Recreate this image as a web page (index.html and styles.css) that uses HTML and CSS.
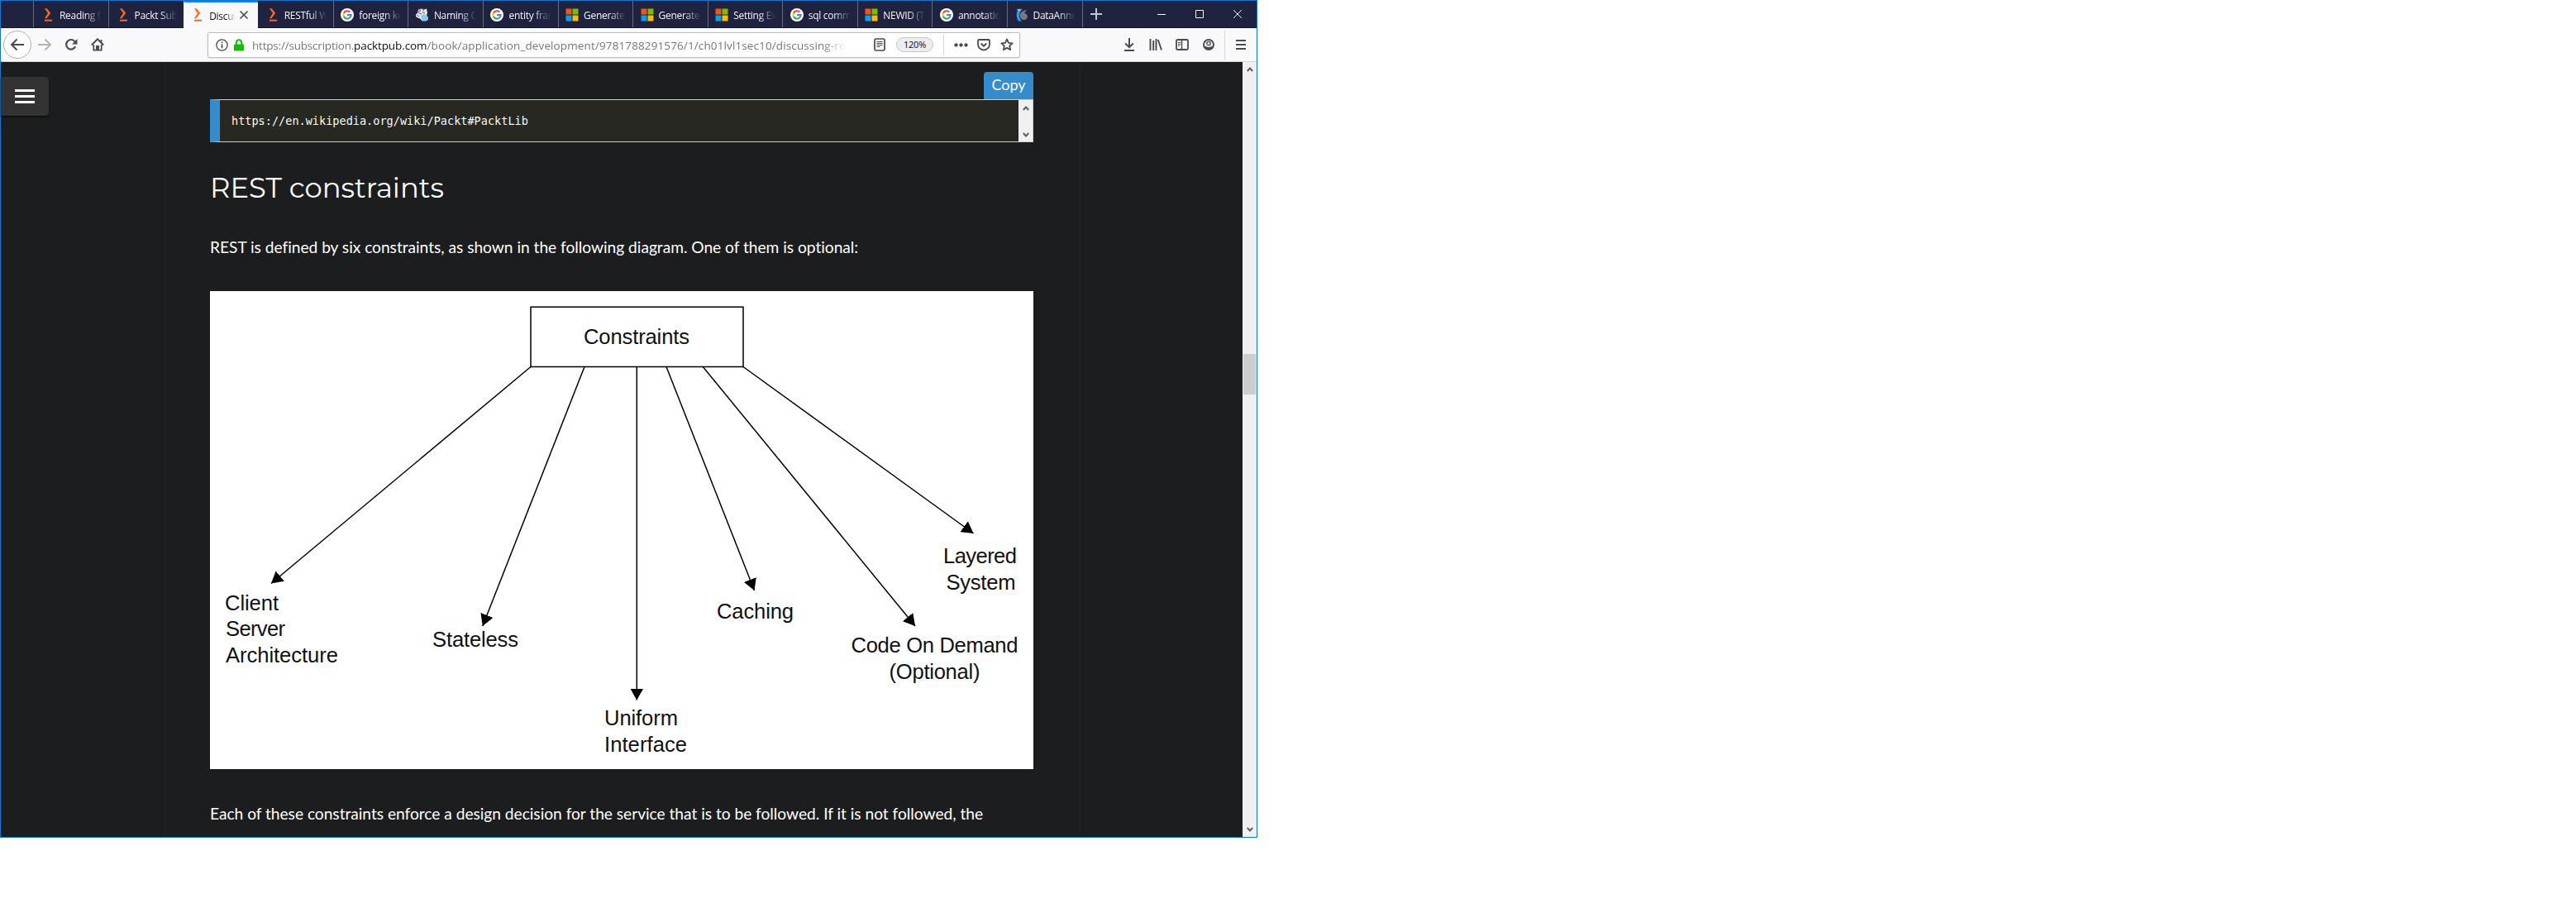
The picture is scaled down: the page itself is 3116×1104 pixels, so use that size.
FILE: index.html
```html
<!DOCTYPE html>
<html lang="en">
<head>
<meta charset="utf-8">
<title>Discussing RESTful</title>
<link rel="stylesheet" href="styles.css">
</head>
<body>
<svg class="defs" width="0" height="0">
  <symbol id="packt" viewBox="0 0 16 16"><path d="M4 0.3h2.600l4.600 5.500-4.800 6.400-2.400-.2 4-6z" fill="#f36b22"/><path d="M4 13.700h9v2H4z" fill="#f36b22"/></symbol>
  <symbol id="google" viewBox="0 0 16 16"><circle cx="8" cy="8" r="8" fill="#fff"/><g fill="none" stroke-width="2.100"><path d="M11.400 4.600A4.600 4.600 0 0 0 3.900 5.900" stroke="#ea4335"/><path d="M3.900 5.900a4.600 4.600 0 0 0 0 4.200" stroke="#fbbc05"/><path d="M3.900 10.100a4.600 4.600 0 0 0 7.100 1.400" stroke="#34a853"/><path d="M11 11.500A4.600 4.600 0 0 0 12.600 8H8" stroke="#4285f4"/></g></symbol>
  <symbol id="ms" viewBox="0 0 16 16"><path d="M.5.5h7v7h-7z" fill="#f65314"/><path d="M8.500 .5h7v7h-7z" fill="#7cbb00"/><path d="M.5 8.500h7v7h-7z" fill="#00a1f1"/><path d="M8.500 8.500h7v7h-7z" fill="#ffbb00"/></symbol>
  <symbol id="naming" viewBox="0 0 16 16"><path d="M3 1.500 6 .500l4 1 3-1 1 5-1 3 2 3-2 3.500-5 .5-3-3-4-1.500-2-3 3-2z" fill="#dfe9f2"/><path d="m6 9 4-2 4 2 1 5-3 1.500-4-.5z" fill="#8cc8ec"/><path d="M5 1v3M9 .5v3M4 6l3 1M8 5l3 1" stroke="#c0473c" stroke-width="1.200"/><path d="M1 8l3 2M3 3l1 3" stroke="#3b6f9c"/></symbol>
  <symbol id="dotnet" viewBox="0 0 16 16"><path d="M5 .5C1 3 .5 11 4 15.500h4C4 12 4 5 9 1z" fill="#2f9bd8"/><path d="M1.500 1h5L5 4z" fill="#7ec4ea"/><path d="M14.500 2C9 2.500 6 5 6 9c0 3 2 5 5 5 2 0 3.800-1.500 3.800-4 0-2.300-1.600-3.800-3.600-3.800C11.500 4.500 13 3 14.500 2z" fill="#777b80"/></symbol>
</svg>
<div class="window">
  <div class="tabs">
    <div class="lead"></div>
    <div class="tab"><svg><use href="#packt"/></svg><span>Reading f</span></div>
    <div class="tab"><svg><use href="#packt"/></svg><span>Packt Subs</span></div>
    <div class="tab active"><svg><use href="#packt"/></svg><span>Discus</span><svg class="x" viewBox="0 0 12 12"><path d="M1.500 1.500l9 9M10.500 1.500l-9 9"/></svg></div>
    <div class="tab"><svg><use href="#packt"/></svg><span>RESTful W</span></div>
    <div class="tab"><svg><use href="#google"/></svg><span>foreign ke</span></div>
    <div class="tab"><svg><use href="#naming"/></svg><span>Naming C</span></div>
    <div class="tab"><svg><use href="#google"/></svg><span>entity fram</span></div>
    <div class="tab"><svg><use href="#ms"/></svg><span>Generated</span></div>
    <div class="tab"><svg><use href="#ms"/></svg><span>Generated</span></div>
    <div class="tab"><svg><use href="#ms"/></svg><span>Setting Ex</span></div>
    <div class="tab"><svg><use href="#google"/></svg><span>sql comma</span></div>
    <div class="tab"><svg><use href="#ms"/></svg><span>NEWID (Tr</span></div>
    <div class="tab"><svg><use href="#google"/></svg><span>annotatio</span></div>
    <div class="tab"><svg><use href="#dotnet"/></svg><span>DataAnno</span></div>
    <div class="new"><svg width="16" height="16" viewBox="0 0 16 16"><path d="M8 1v14M1 8h14" stroke="#c4c5cf" stroke-width="2"/></svg></div>
    <div class="ctl"><svg width="12" height="12" viewBox="0 0 12 12"><path d="M1 6.500h10"/></svg></div>
    <div class="ctl"><svg width="12" height="12" viewBox="0 0 12 12"><path d="M1.500 1.500h9v9h-9z"/></svg></div>
    <div class="ctl"><svg width="12" height="12" viewBox="0 0 12 12"><path d="M1 1l10 10M11 1L1 11"/></svg></div>
  </div>

  <div class="toolbar">
    <div class="back"><svg width="18" height="18" viewBox="0 0 18 18"><path d="M17 9H2M8.500 2.500L2 9l6.500 6.500"/></svg></div>
    <div class="btn forward"><svg width="18" height="18" viewBox="0 0 18 18"><path d="M1 9h15M9.500 2.500L16 9l-6.500 6.500"/></svg></div>
    <div class="btn"><svg width="16" height="16" viewBox="0 0 16 16"><path d="M13.200 10.300A5.800 5.800 0 1 1 12.600 4.300" stroke-width="2.200"/><path d="M15.500 1v6.500H9z" class="solid"/></svg></div>
    <div class="btn"><svg width="16" height="16" viewBox="0 0 16 16"><path d="M.8 8.500L8 1.300l7.200 7.200" stroke-width="2"/><path d="M3.300 8v6.700h9.400V8M12.500 2v3" stroke-width="1.800"/><path d="M6 15V9h4v6z" class="solid"/></svg></div>
    <div class="urlbar">
      <svg class="info" width="15" height="15" viewBox="0 0 15 15"><circle cx="7.500" cy="7.500" r="6.600"/><path d="M7.500 6.500v4.800M7.500 3.500v1.800" stroke-width="1.700"/></svg>
      <svg class="lock" width="12" height="15" viewBox="0 0 12 15"><path d="M2.800 8V4.500a3.200 3.200 0 0 1 6.400 0V8" fill="none" stroke="#12bc00" stroke-width="2"/><rect y="6.500" width="12" height="8" rx="1" fill="#12bc00"/></svg>
      <div class="url"><span class="sub">https://subscription.</span><b>packtpub.com</b><span class="path">/book/application_development/9781788291576/1/ch01lvl1sec10/discussing-restful</span></div>
      <svg class="reader" width="14" height="16" viewBox="0 0 14 16"><rect x="1" y="1" width="12" height="14" rx="1.500" stroke-width="1.700"/><path d="M3.500 4.500h7M3.500 6.500h7M3.500 8.500h7M3.500 10.500h4" stroke-width="1"/></svg>
      <span class="pill">120%</span>
      <i class="sep"></i>
      <svg class="dots" width="17" height="5" viewBox="0 0 17 5"><path class="solid" d="M2.500 .3a2.200 2.200 0 1 0 .01 0zM8.500 .3a2.200 2.200 0 1 0 .01 0zM14.500 .3a2.200 2.200 0 1 0 .01 0z"/></svg>
      <svg class="pocket" width="16" height="15" viewBox="0 0 16 15"><path d="M2.300 1h11.400q1.300 0 1.300 1.300V6.500a7 7 0 0 1-14 0V2.300Q1 1 2.300 1z" stroke-width="1.800"/><path d="M4.700 5.500L8 8.700l3.300-3.200" stroke-width="1.900"/></svg>
      <svg class="star" width="16" height="16" viewBox="0 0 16 16"><path d="M8 1.500l2 4.300 4.600.5-3.400 3.200.9 4.700L8 11.900l-4.100 2.300.9-4.700L1.400 6.300 6 5.800z" stroke-width="1.800" stroke-linejoin="round"/></svg>
    </div>
    <div class="tools">
      <div class="btn"><svg width="14" height="16" viewBox="0 0 14 16"><path d="M7 0v11M2.200 6.500L7 11.200l4.800-4.700M1 15h12" stroke-width="2"/></svg></div>
      <div class="btn"><svg width="16" height="14" viewBox="0 0 16 14"><path d="M1.500 0v14M5.200 2v12M8.500 0v14M10.800 1l4.200 12.500" stroke-width="1.900"/></svg></div>
      <div class="btn"><svg width="16" height="14" viewBox="0 0 16 14"><rect x="1" y="1" width="14" height="12" rx="1.500" stroke-width="1.800"/><path d="M7.500 1v12" stroke-width="1.500"/><path d="M3 4.500h3M3 6.500h3M3 8.500h2" stroke-width="1"/></svg></div>
      <div class="btn"><svg width="14" height="14" viewBox="0 0 14 14"><circle cx="7" cy="7" r="6" stroke-width="1.900"/><circle cx="7" cy="5.500" r="2.200" stroke-width="1.300"/><path class="solid" d="M2.200 8.300Q7 11.500 11.800 8.300 11 13 7 13 3 13 2.200 8.300z"/></svg></div>
      <i class="sep"></i>
      <div class="btn menu"><svg width="14" height="14" viewBox="0 0 14 14"><path d="M1 2h12M1 7h12M1 12h12" stroke-width="2"/></svg></div>
    </div>
  </div>

  <div class="page">
    <div class="side"><div class="burger"><i></i><i></i><i></i></div></div>
    <article>
      <div class="copyrow"><button>Copy</button></div>
      <div class="code"><code>https://en.wikipedia.org/wiki/Packt#PacktLib</code>
        <div class="codebar"><svg width="8" height="6" viewBox="0 0 8 6"><path d="M.8 5L4 1.500 7.200 5"/></svg><svg width="8" height="6" viewBox="0 0 8 6"><path d="M.8 1L4 4.500 7.200 1"/></svg></div>
      </div>
      <h2>REST constraints</h2>
      <p class="intro">REST is defined by six constraints, as shown in the following diagram. One of them is optional:</p>
      <svg class="figure" width="996" height="578" viewBox="254 352 996 578">
        <defs><marker id="tip" viewBox="0 0 14 16" refX="14" refY="8" markerWidth="14" markerHeight="16" markerUnits="userSpaceOnUse" orient="auto"><path d="M0 0l14 8-14 8z"/></marker></defs>
        <g fill="none" stroke="#000" stroke-width="1.500">
          <rect x="642" y="371.200" width="257" height="72.300"/>
          <g marker-end="url(#tip)">
            <path d="M642 443.500L328 705.500"/><path d="M707 443.500L583.800 757"/><path d="M770.300 443.500V846.500"/>
            <path d="M806 443.500L912.500 714"/><path d="M850.300 443.500L1107 757"/><path d="M899 443.500L1177.500 645"/>
          </g>
        </g>
        <g class="labels">
          <text x="706" y="416" textLength="128">Constraints</text>
          <text x="272" y="737.500" textLength="65">Client</text>
          <text x="273" y="769.300" textLength="72">Server</text>
          <text x="273" y="801.300" textLength="136">Architecture</text>
          <text x="523" y="782.200" textLength="104">Stateless</text>
          <text x="731" y="877" textLength="89">Uniform</text>
          <text x="731" y="909" textLength="100">Interface</text>
          <text x="867" y="748.300" textLength="93">Caching</text>
          <text x="1029.500" y="789.300" textLength="202">Code On Demand</text>
          <text x="1075.500" y="821" textLength="110">(Optional)</text>
          <text x="1141" y="681" textLength="89">Layered</text>
          <text x="1144.500" y="713" textLength="84">System</text>
        </g>
      </svg>
      <p class="outro">Each of these constraints enforce a design decision for the service that is to be followed. If it is not followed, the</p>
    </article>
    <div class="scroll">
      <svg width="8" height="6" viewBox="0 0 8 6"><path d="M.8 5L4 1.500 7.200 5"/></svg>
      <i></i>
      <svg width="8" height="6" viewBox="0 0 8 6"><path d="M.8 1L4 4.500 7.200 1"/></svg>
    </div>
  </div>
</div>
</body>
</html>
```
FILE: styles.css
```css
* { box-sizing: border-box; }
body { margin: 0; background: #fff; font-family: "Open Sans", "Noto Sans", sans-serif; }
svg { display: block; flex: none; }
.defs { position: absolute; }
.window { width: 1521px; height: 1013px; border: 1px solid #0d77d5; display: flex; flex-direction: column; }

/* tab strip */
.tabs { height: 33px; background: #202340; display: flex; align-items: stretch; flex: none; border-bottom: 1px solid #14132c; }
.lead { width: 39.500px; }
.tab { width: 90.600px; border-left: 1px solid #686a80; display: flex; align-items: center; padding: 1px 0 0 8.500px; color: #f5f5fa; font-size: 12px; letter-spacing: -.3px; white-space: nowrap; }
.tab svg { width: 16px; height: 16px; margin-right: 6px; }
.tab span { width: 51px; overflow: hidden; -webkit-mask-image: linear-gradient(90deg, #000 60%, transparent 100%); mask-image: linear-gradient(90deg, #000 60%, transparent 100%); margin-top: 2px; }
.tab.active { background: #f9f9fa; color: #0c0c0d; border-left-color: #f9f9fa; border-top: 2px solid #0a84ff; margin-bottom: -1px; padding-top: 0; padding-bottom: 1px; }
.tab.active + .tab { border-left-color: #202340; }
.tab.active span { width: 32px; }
.tab.active .x { width: 12px; height: 12px; margin: 0 0 0 4px; stroke: #4a4a4f; stroke-width: 1.600; }
.new { width: 34px; display: grid; place-items: center; border-left: 1px solid #686a80; margin-right: 39.500px; }
.ctl { width: 46px; display: grid; place-items: center; }
.ctl svg { fill: none; stroke: #fff; stroke-width: 1; }

/* navigation toolbar */
.toolbar { height: 41px; background: #f9f9fa; border-bottom: 1px solid #d4d4d6; display: flex; align-items: center; flex: none; padding-left: 3px; }
.toolbar svg { fill: none; stroke: #4a4a4f; stroke-width: 2; }
.toolbar .solid { fill: #4a4a4f; stroke: none; }
.back { width: 34px; height: 34px; border: 1px solid #b1b1b3; border-radius: 50%; background: #fff; display: grid; place-items: center; }
.btn { width: 32px; display: grid; place-items: center; }
.forward svg { stroke: #b4b4b6; }
.urlbar { margin-left: 117px; width: 983px; height: 31px; border: 1px solid #bcbcbe; border-radius: 2px; background: #fff; display: flex; align-items: center; box-shadow: 0 1px 2px rgba(0,0,0,.08); }
.urlbar .info { margin-left: 9px; stroke-width: 1.300; }
.urlbar .lock { margin: 0 10.500px 0 6.500px; stroke: none; }
.url { width: 718px; height: 24px; line-height: 24px; font-size: 13.500px; color: #777; white-space: nowrap; overflow: hidden; display: flex; margin-right: 34px; padding-top: 1px; -webkit-mask-image: linear-gradient(90deg, #000 96%, transparent); mask-image: linear-gradient(90deg, #000 96%, transparent); }
.url b { font-weight: 400; color: #0c0c0d; letter-spacing: -.1px; }
.sub { letter-spacing: -.2px; }
.path { letter-spacing: .12px; }
.pill { margin-left: 13px; width: 45px; height: 18px; border: 1px solid #c8c8ca; border-radius: 9px; background: #ededf0; font-size: 11px; line-height: 16px; text-align: center; color: #0c0c0d; letter-spacing: -.2px; }
.sep { width: 1px; height: 24px; background: #d7d7db; }
.urlbar .sep { margin: 0 12px; }
.pocket { margin: 0 12px 0 11px; }
.tools { display: flex; align-items: center; margin-left: 116px; }
.tools .sep { height: 35px; margin-left: 3px; }
.menu { width: 38px; }

/* page */
.page { flex: 1; min-height: 0; background: #1c1d1e; display: flex; }
.side { width: 197px; padding-top: 18px; }
.burger { width: 58px; height: 47px; background: #333; border-radius: 0 4px 4px 0; box-shadow: 0 1px 2px #000; display: flex; flex-direction: column; justify-content: center; gap: 4px; padding-left: 17px; }
.burger i { width: 24px; height: 3.300px; background: #fff; }
article { width: 1109px; border: solid #202122; border-width: 0 2px; padding: 12px 0 0 54px; color: #fff; overflow: hidden; margin-right: 196px; }
.copyrow { display: flex; width: 996px; justify-content: flex-end; }
button { width: 60px; height: 33px; border: 0; padding: 0; border-radius: 4px 4px 0 0; background: #358ccb; color: #fff; font: 18px/31px Lato, sans-serif; padding-bottom: 2px; }
.code { width: 996px; height: 52px; border: 1px solid #ccc; border-left: 12px solid #358ccb; background: #272822; display: flex; justify-content: space-between; }
code { font: 13.550px/50px "DejaVu Sans Mono", monospace; color: #f8f8f2; padding-left: 14px; }
.codebar { width: 17px; background: #f0f0f0; display: flex; flex-direction: column; align-items: center; justify-content: space-between; padding: 7px 0 5px; }
.codebar path, .scroll path { fill: none; stroke: #606060; stroke-width: 2; }
h2 { margin: 31px 0 0; font: 400 33.800px/48px Montserrat, Inter, sans-serif; height: 48px; white-space: nowrap; }
p { margin: 0; font: 19.200px/30px Lato, sans-serif; height: 30px; white-space: nowrap; font-variant-ligatures: none; }
.intro { margin-top: 33px; letter-spacing: -.03px; }
.figure { margin-top: 38px; background: #fff; }
.labels text { font: 25.600px "Liberation Sans", Arial, sans-serif; fill: #111; }
.outro { margin-top: 39px; letter-spacing: -.03px; }
.scroll { width: 17px; background: #f0f0f0; display: flex; flex-direction: column; align-items: center; padding: 6px 0; }
.scroll i { width: 15px; height: 49px; background: #cdcdcd; margin: 341px 0 auto; }
```
